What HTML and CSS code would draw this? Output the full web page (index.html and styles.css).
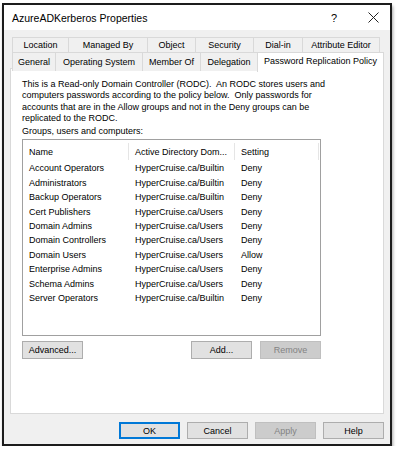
FILE: index.html
```html
<!DOCTYPE html>
<html>
<head>
<meta charset="utf-8">
<link rel="stylesheet" href="styles.css">
</head>
<body>
<div class="window">
  <div class="titlebar">
    <span class="title">AzureADKerberos Properties</span>
    <span class="help">?</span>
    <span class="close"><svg width="11" height="11" viewBox="0 0 11 11"><path d="M0.5 0.5 L10.5 10.5 M10.5 0.5 L0.5 10.5" stroke="#222" stroke-width="1"/></svg></span>
  </div>
  <div class="client">
    <div class="tabs">
      <div class="tabrow row1">
        <div class="tab">Location</div>
        <div class="tab">Managed By</div>
        <div class="tab">Object</div>
        <div class="tab">Security</div>
        <div class="tab">Dial-in</div>
        <div class="tab">Attribute Editor</div>
      </div>
      <div class="tabrow row2">
        <div class="tab">General</div>
        <div class="tab">Operating System</div>
        <div class="tab">Member Of</div>
        <div class="tab">Delegation</div>
        <div class="tab selected">Password Replication Policy</div>
      </div>
    </div>
    <div class="panel">
      <p class="desc">This is a Read-only Domain Controller (RODC).&nbsp; An RODC stores users and computers passwords according to the policy below.&nbsp; Only passwords for accounts that are in the Allow groups and not in the Deny groups can be replicated to the RODC.</p>
      <div class="label">Groups, users and computers:</div>
      <div class="listbox">
        <div class="lrow header">
          <div class="c1">Name</div>
          <div class="c2">Active Directory Dom...</div>
          <div class="c3">Setting</div>
        </div>
        <div class="lrow"><div class="c1">Account Operators</div><div class="c2">HyperCruise.ca/Builtin</div><div class="c3">Deny</div></div>
        <div class="lrow"><div class="c1">Administrators</div><div class="c2">HyperCruise.ca/Builtin</div><div class="c3">Deny</div></div>
        <div class="lrow"><div class="c1">Backup Operators</div><div class="c2">HyperCruise.ca/Builtin</div><div class="c3">Deny</div></div>
        <div class="lrow"><div class="c1">Cert Publishers</div><div class="c2">HyperCruise.ca/Users</div><div class="c3">Deny</div></div>
        <div class="lrow"><div class="c1">Domain Admins</div><div class="c2">HyperCruise.ca/Users</div><div class="c3">Deny</div></div>
        <div class="lrow"><div class="c1">Domain Controllers</div><div class="c2">HyperCruise.ca/Users</div><div class="c3">Deny</div></div>
        <div class="lrow"><div class="c1">Domain Users</div><div class="c2">HyperCruise.ca/Users</div><div class="c3">Allow</div></div>
        <div class="lrow"><div class="c1">Enterprise Admins</div><div class="c2">HyperCruise.ca/Users</div><div class="c3">Deny</div></div>
        <div class="lrow"><div class="c1">Schema Admins</div><div class="c2">HyperCruise.ca/Users</div><div class="c3">Deny</div></div>
        <div class="lrow"><div class="c1">Server Operators</div><div class="c2">HyperCruise.ca/Builtin</div><div class="c3">Deny</div></div>
      </div>
      <div class="listbuttons">
        <button class="btn">Advanced...</button>
        <span class="spacer"></span>
        <button class="btn">Add...</button>
        <button class="btn disabled">Remove</button>
      </div>
    </div>
    <div class="footer">
      <button class="btn fbtn default">OK</button>
      <button class="btn fbtn">Cancel</button>
      <button class="btn fbtn disabled">Apply</button>
      <button class="btn fbtn">Help</button>
    </div>
  </div>
</div>
</body>
</html>
```

FILE: styles.css
```css
* { box-sizing: border-box; }
html, body { margin: 0; padding: 0; background: #ffffff; }
body {
  font-family: "Liberation Sans", Arial, sans-serif;
  font-size: 9px;
  color: #000;
  padding: 3px 0 0 2px;
}
.window {
  width: 390px;
  height: 443px;
  border: 2px solid #1c1c1c;
  background: #f0f0f0;
  box-shadow: 1px 3px 3px rgba(0,0,0,0.35);
  display: flex;
  flex-direction: column;
}
.titlebar {
  height: 25px;
  background: #ffffff;
  display: flex;
  align-items: center;
  padding: 0 0 0 8px;
}
.title { font-size: 10.5px; flex: 1; }
.help { font-size: 11px; width: 30px; text-align: center; margin-right: 9px; }
.close { width: 30px; display: flex; justify-content: center; margin-right: 2px; }
.client {
  flex: 1;
  display: flex;
  flex-direction: column;
  padding: 7px 6px 0 6px;
}
.tabs { position: relative; height: 31px; }
.tabrow { display: grid; }
.row1 {
  margin-left: 2px;
  grid-template-columns: 56px 79px 48px 58px 49px 78px;
  height: 15px;
}
.row2 {
  margin-left: 2px;
  grid-template-columns: 43px 87px 58px 57px 127px;
  height: 16px;
  align-items: end;
}
.tab {
  border: 1px solid #d9d9d9;
  border-right: none;
  border-bottom: none;
  background: #f0f0f0;
  height: 100%;
  display: flex;
  align-items: center;
  justify-content: center;
  white-space: nowrap;
}
.row1 .tab:last-child { border-right: 1px solid #d9d9d9; }
.tab.selected {
  background: #ffffff;
  border-right: 1px solid #d9d9d9;
  height: 20px;
  margin-bottom: -1px;
  position: relative;
  z-index: 2;
  padding-bottom: 3px;
}
.panel {
  height: 346px;
  background: #ffffff;
  border: 1px solid #d9d9d9;
  padding: 10px 0 0 11px;
}
.desc {
  margin: 0;
  width: 310px;
  line-height: 11.3px;
}
.label { margin-top: 2px; line-height: 11px; }
.listbox {
  margin-top: 2px;
  width: 299px;
  height: 197px;
  border: 1px solid #a0a0a0;
}
.lrow {
  display: grid;
  grid-template-columns: 106px 106px 84px;
  height: 14.4px;
  align-items: center;
  white-space: nowrap;
}
.lrow > div { padding-left: 6px; overflow: hidden; }
.lrow.header { height: 20px; margin-bottom: 1px; align-items: end; }
.header > div { height: 17px; display: flex; align-items: center; border-right: 1px solid #e5e5e5; }
.listbuttons {
  display: flex;
  width: 299px;
  margin-top: 5px;
}
.spacer { flex: 1; }
.btn {
  font-family: inherit;
  font-size: 9px;
  height: 18px;
  width: 61px;
  padding: 0;
  background: #e1e1e1;
  border: 1px solid #adadad;
  color: #000;
}
.listbuttons .btn + .btn { margin-left: 8px; }
.btn.disabled { background: #cccccc; border-color: #bfbfbf; color: #838383; }
.footer {
  display: flex;
  justify-content: flex-end;
  gap: 7px;
  padding: 8px 0 0 0;
}
.fbtn { width: 61px; height: 17px; }
.btn.default { border: 2px solid #0078d7; }
```
